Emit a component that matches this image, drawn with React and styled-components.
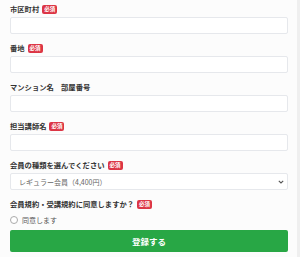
import React from "react";
import styled, { createGlobalStyle } from "styled-components";

const GlobalStyle = createGlobalStyle`
  body {
    margin: 0;
    background: #fcfcfc;
    font-family: "Noto Sans CJK JP", "Noto Sans", sans-serif;
  }
`;

function App() {
  return (
    <Page>
      <GlobalStyle />
      <Form>
        <Field>
          <Label>
            市区町村<Badge>必須</Badge>
          </Label>
          <Input />
        </Field>
        <Field>
          <Label>
            番地<Badge>必須</Badge>
          </Label>
          <Input />
        </Field>
        <Field>
          <Label>マンション名　部屋番号</Label>
          <Input />
        </Field>
        <Field>
          <Label>
            担当講師名<Badge>必須</Badge>
          </Label>
          <Input />
        </Field>
        <Field>
          <Label>
            会員の種類を選んでください<Badge>必須</Badge>
          </Label>
          <Select>
            <span>レギュラー会員（4,400円）</span>
            <svg width="6" height="4" viewBox="0 0 6 4">
              <path d="M0.8 0.8 L3 3 L5.2 0.8" fill="none" stroke="#555" strokeWidth="1.1" />
            </svg>
          </Select>
        </Field>
        <Field>
          <Label>
            会員規約・受講規約に同意しますか？<Badge>必須</Badge>
          </Label>
          <RadioRow>
            <Radio />
            同意します
          </RadioRow>
        </Field>
        <Submit>登録する</Submit>
      </Form>
      <Edge />
    </Page>
  );
}

const Page = styled.div`
  display: flex;
  width: 300px;
  height: 257px;
  overflow: hidden;
`;
const Form = styled.div`
  flex: 1;
  padding: 3px 9px 0 10px;
  display: flex;
  flex-direction: column;
`;
const Edge = styled.div`
  width: 3px;
  background: #efefef;
`;
const Field = styled.div`
  display: flex;
  flex-direction: column;
  margin-bottom: 8px;
`;
const Label = styled.div`
  display: flex;
  align-items: center;
  height: 12px;
  margin-bottom: 2px;
  font-size: 7.3px;
  font-weight: bold;
  color: #333;
  white-space: nowrap;
`;
const Badge = styled.span`
  display: inline-flex;
  align-items: center;
  justify-content: center;
  margin-left: 3px;
  width: 15px;
  height: 9px;
  border-radius: 2px;
  background: #dc3545;
  color: #fff;
  font-size: 5.5px;
  font-weight: bold;
`;
const Input = styled.div`
  height: 17px;
  box-sizing: border-box;
  background: #fff;
  border: 1px solid #e6e8ec;
  border-radius: 2px;
`;
const Select = styled(Input)`
  display: flex;
  align-items: center;
  justify-content: space-between;
  padding: 0 3px 0 8px;
  font-size: 7px;
  color: #666;
`;
const RadioRow = styled.div`
  display: flex;
  align-items: center;
  height: 12px;
  margin-top: 2px;
  font-size: 7px;
  color: #555;
  gap: 4px;
`;
const Radio = styled.span`
  width: 6px;
  height: 6px;
  border-radius: 50%;
  border: 1px solid #aaa;
  background: #fff;
`;
const Submit = styled.div`
  margin-top: -4px;
  height: 22px;
  display: flex;
  align-items: center;
  justify-content: center;
  background: #28a745;
  border-radius: 2px;
  color: #fff;
  font-size: 8.5px;
  font-weight: bold;
`;

export default App;
